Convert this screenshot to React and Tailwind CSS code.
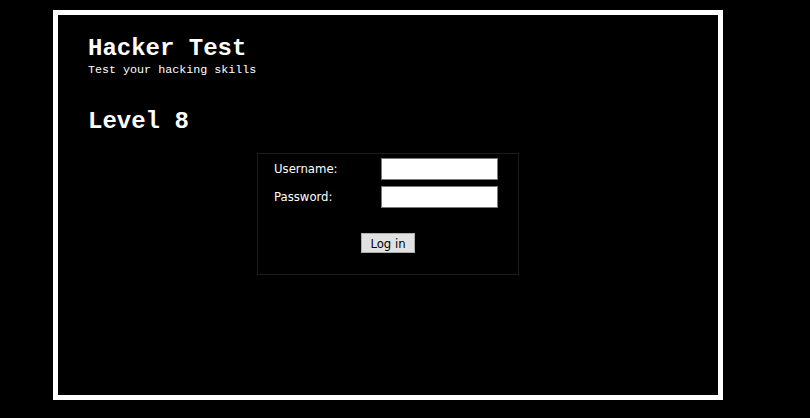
import React from 'react';

const App = () => {
  return (
    <div className="bg-black w-[810px] h-[418px] pt-[10px] pl-[53px]">
      <div className="w-[670px] h-[390px] border-[5px] border-white bg-black pl-[30px] pt-[20px]">
        {/* Header */}
        <h1 className="font-['Liberation_Mono',monospace] font-bold text-[24px] leading-[28px] text-white">
          Hacker Test
        </h1>
        <p className="font-['Liberation_Mono',monospace] text-[11.7px] leading-[14px] text-white">
          Test your hacking skills
        </p>
        <h2 className="mt-[31px] font-['Liberation_Mono',monospace] font-bold text-[24px] leading-[28px] text-white">
          Level 8
        </h2>

        {/* Login form */}
        <div className="mt-[17px] -ml-[30px] flex justify-center">
          <form className="w-[262px] border border-[#1c1c1c] pl-[16px] pt-[4px] pb-[21px] font-['DejaVu_Sans_Condensed','Liberation_Sans',sans-serif] text-[13px] text-white">
            <div className="grid grid-cols-[107px_117px] gap-y-[6px] items-center">
              <label>Username:</label>
              <input type="text" className="h-[22px] bg-white border border-[#7a7a7a] text-black px-1 outline-none" />
              <label>Password:</label>
              <input type="password" className="h-[22px] bg-white border border-[#7a7a7a] text-black px-1 outline-none" />
            </div>
            <div className="mt-[25px] -ml-[16px] flex justify-center">
              <button type="button" className="w-[54px] h-[20px] bg-[#e1e1e1] border border-[#adadad] text-black text-[13px] leading-none">
                Log in
              </button>
            </div>
          </form>
        </div>
      </div>
    </div>
  );
};

export default App;
